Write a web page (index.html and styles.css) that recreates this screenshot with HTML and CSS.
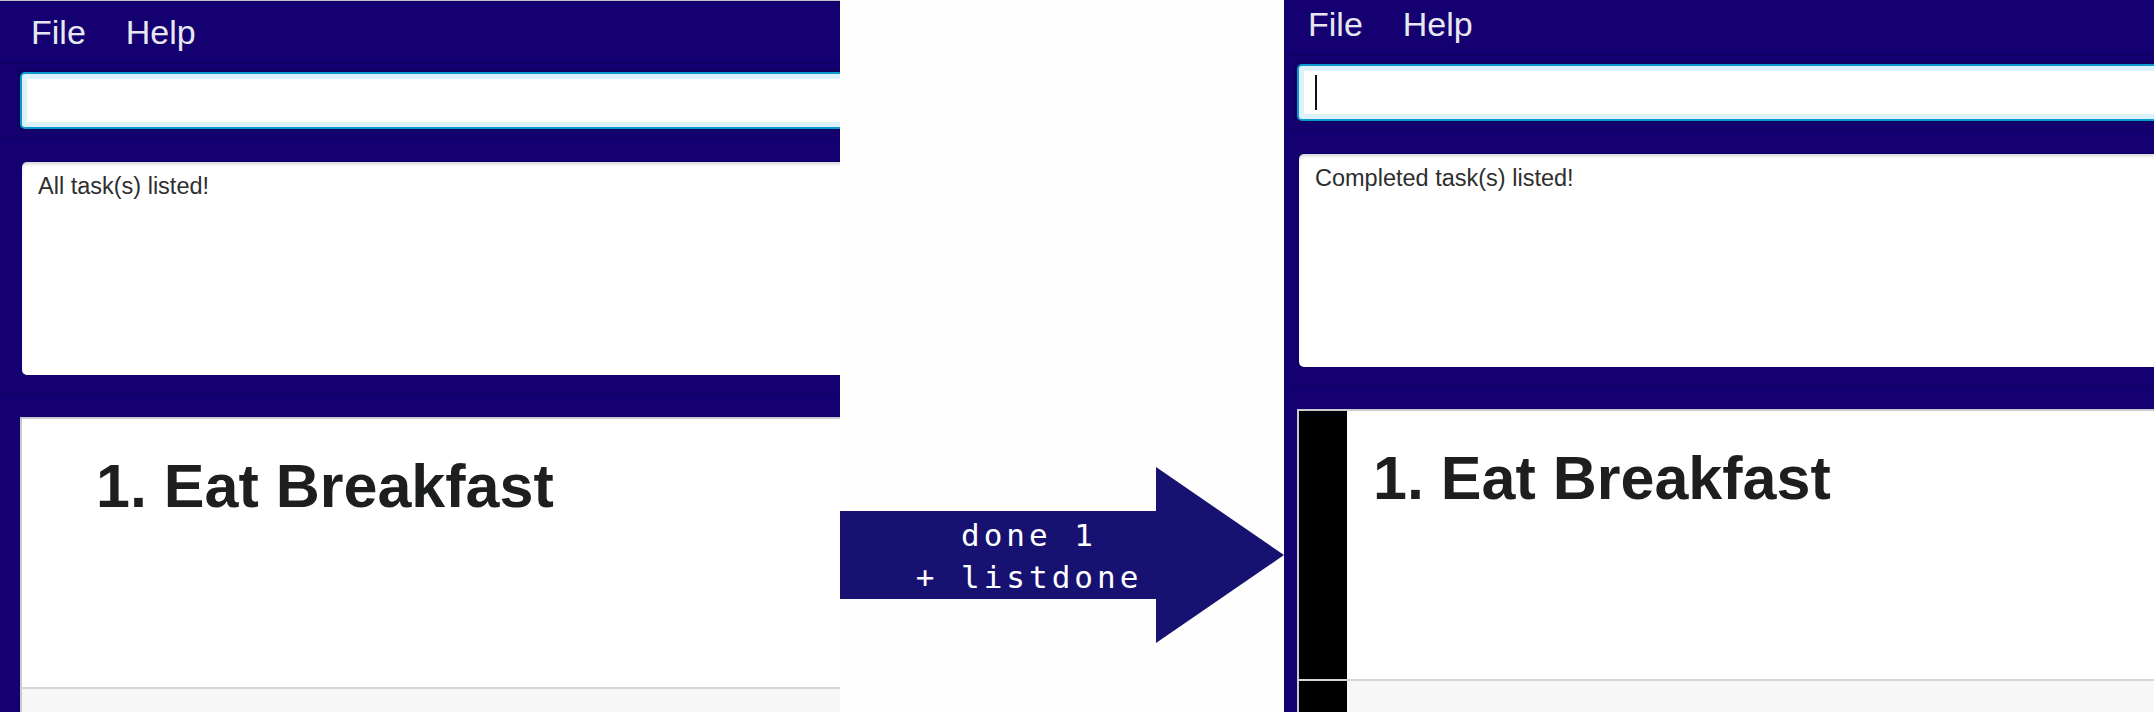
FILE: index.html
```html
<!DOCTYPE html>
<html lang="en">
<head>
<meta charset="utf-8">
<title>done 1 + listdone</title>
<link rel="stylesheet" href="styles.css">
</head>
<body>
<div class="stage">
  <section class="window window--before">
    <div class="app">
      <nav class="menubar"><span class="menu-item">File</span><span class="menu-item">Help</span></nav>
      <div class="command"><div class="command-input"></div></div>
      <div class="results"><div class="results-box">All task(s) listed!</div></div>
      <div class="tasks">
        <div class="task-card">
          <div class="task-strip"></div>
          <h2 class="task-title">1. Eat Breakfast</h2>
        </div>
        <div class="task-card task-card--next">
          <div class="task-strip"></div>
        </div>
      </div>
    </div>
  </section>

  <div class="transition">
    <div class="arrow">
      <div class="arrow-body"><span>done 1</span><span>+ listdone</span></div>
      <div class="arrow-head"></div>
    </div>
  </div>

  <section class="window window--after">
    <div class="app app--cropped">
      <nav class="menubar"><span class="menu-item">File</span><span class="menu-item">Help</span></nav>
      <div class="command"><div class="command-input"><span class="caret"></span></div></div>
      <div class="results"><div class="results-box">Completed task(s) listed!</div></div>
      <div class="tasks">
        <div class="task-card task-card--done">
          <div class="task-strip"></div>
          <h2 class="task-title">1. Eat Breakfast</h2>
        </div>
        <div class="task-card task-card--next task-card--done">
          <div class="task-strip"></div>
        </div>
      </div>
    </div>
  </section>
</div>
</body>
</html>
```

FILE: styles.css
```css
html, body {
  margin: 0;
  padding: 0;
  background: #fefefe;
}

body {
  font-family: "Liberation Sans", Arial, sans-serif;
}

.stage {
  display: flex;
  width: 2154px;
  height: 712px;
  overflow: hidden;
}

.window {
  height: 712px;
  overflow: hidden;
  background: #140070;
  box-sizing: border-box;
}

.window--before {
  width: 840px;
  flex: none;
  border-top: 1px solid #c2c2c8;
}

.window--after {
  flex: 1;
}

.app {
  width: 1400px;
}

.app--cropped {
  margin: -7px 0 0 -7px;
}

/* menu */
.menubar {
  display: flex;
  gap: 40px;
  height: 62px;
  padding-left: 31px;
  font-size: 34px;
  line-height: 62px;
  color: #e7e7ef;
}

/* command box */
.command {
  border-top: 1px solid #0f005c;
  border-bottom: 1px solid #0f005c;
  padding: 8px 0 8px 20px;
}

.command-input {
  display: flex;
  align-items: center;
  height: 57px;
  box-sizing: border-box;
  padding-left: 16px;
  background: #fff;
  border: 2px solid #0a9ad4;
  border-radius: 5px;
  box-shadow: inset 0 0 0 5px #dcf1fa, 0 0 0 3px #0f0062;
}

.caret {
  width: 2px;
  height: 35px;
  background: #111;
}

/* result display */
.results {
  padding: 24px 0 19px 22px;
  border-bottom: 1px solid #0f005c;
}

.results-box {
  height: 213px;
  box-sizing: border-box;
  padding: 11px 16px;
  background: #fff;
  border-radius: 5px;
  box-shadow: inset 0 3px 4px -2px rgba(0, 0, 0, 0.25);
  font-size: 23.5px;
  color: #2e2e2e;
}

/* task list */
.tasks {
  padding: 22px 0 0 20px;
}

.task-card {
  display: flex;
  height: 272px;
  box-sizing: border-box;
  background: #fff;
  border: 2px solid #c9c9cf;
  border-right: none;
  border-bottom-color: #d6d6d6;
}

.task-card--next {
  height: 60px;
  background: #f7f7f7;
  border-top: none;
  border-bottom: none;
}

.task-strip {
  width: 48px;
  flex: none;
}

.task-card--done .task-strip {
  background: #000;
}

.task-title {
  margin: 0;
  padding: 31px 0 0 26px;
  font-size: 61px;
  font-weight: 700;
  line-height: 72px;
  color: #1d1f1f;
}

/* transition arrow */
.transition {
  width: 444px;
  flex: none;
  padding-top: 467px;
  box-sizing: border-box;
}

.arrow {
  display: flex;
  align-items: center;
}

.arrow-body {
  display: flex;
  flex-direction: column;
  align-items: center;
  width: 316px;
  height: 88px;
  box-sizing: border-box;
  padding: 3px 0 0 62px;
  background: #171271;
  color: #fff;
  font-family: "DejaVu Sans Mono", "Liberation Mono", monospace;
  font-size: 31px;
  letter-spacing: 4px;
  line-height: 42px;
  white-space: pre;
}

.arrow-head {
  width: 128px;
  height: 176px;
  background: #171271;
  clip-path: polygon(0 0, 100% 50%, 0 100%);
}
```
